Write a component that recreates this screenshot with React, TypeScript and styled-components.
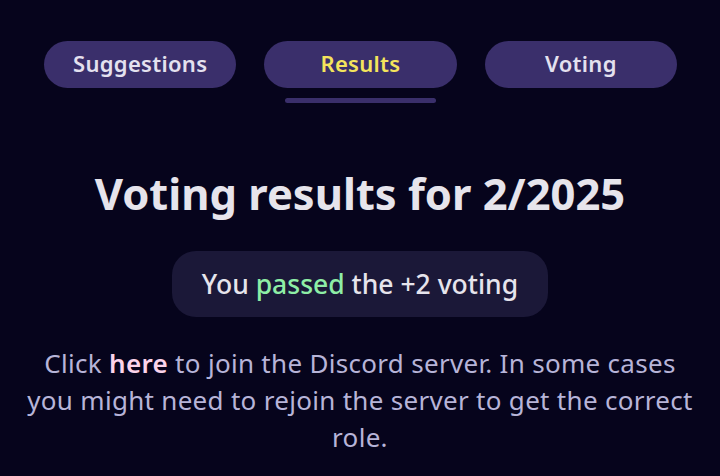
import * as React from "react";
import styled, { createGlobalStyle } from "styled-components";

const GlobalStyle = createGlobalStyle`
  html, body {
    margin: 0;
    padding: 0;
    background: #06041c;
  }
  body {
    font-family: "Noto Sans", "DejaVu Sans", sans-serif;
  }
`;

const Page = styled.div`
  width: 720px;
  height: 476px;
  overflow: hidden;
  background: #06041c;
  display: flex;
  flex-direction: column;
  align-items: center;
`;

const TabBar = styled.div`
  width: 100%;
  box-sizing: border-box;
  padding: 41px 43px 0 44px;
  display: grid;
  grid-template-columns: repeat(3, 1fr);
  column-gap: 28px;
`;

const TabCell = styled.div`
  display: flex;
  flex-direction: column;
  align-items: center;
`;

const Tab = styled.button<{ $active?: boolean }>`
  width: 100%;
  height: 47px;
  padding: 0 0 3px;
  border: none;
  border-radius: 24px;
  background: #3a2f6b;
  color: ${(p) => (p.$active ? "#f4e45c" : "#e4e1ef")};
  font-family: "Noto Sans", sans-serif;
  font-size: 22px;
  letter-spacing: 0.3px;
  font-weight: 600;
  cursor: pointer;
`;

const Underline = styled.div<{ $active?: boolean }>`
  width: 151px;
  height: 5px;
  margin-top: 10px;
  border-radius: 3px;
  background: ${(p) => (p.$active ? "#3a2f6b" : "transparent")};
`;

const Title = styled.h1`
  margin: 60px 0 0;
  font-size: 43.5px;
  font-weight: 700;
  color: #e6e4ec;
  line-height: 60px;
`;

const ResultPill = styled.div`
  margin-top: 28px;
  padding: 0 30px;
  height: 66px;
  border-radius: 24px;
  background: #1b1838;
  display: flex;
  align-items: center;
  font-size: 26.5px;
  font-weight: 500;
  color: #e6e4ec;
`;

const Passed = styled.span`
  color: #8eeea6;
`;

const Note = styled.p`
  margin: 28px 0 0;
  padding: 0 18px;
  text-align: center;
  font-size: 26px;
  letter-spacing: 0.3px;
  line-height: 37px;
  color: #b7b4d8;
`;

const Link = styled.a`
  color: #fbd3ea;
  font-weight: 600;
  text-decoration: none;
`;

const tabs = ["Suggestions", "Results", "Voting"];

export default function App() {
  const active = "Results";
  return (
    <Page>
      <GlobalStyle />
      <TabBar>
        {tabs.map((t) => (
          <TabCell key={t}>
            <Tab $active={t === active}>{t}</Tab>
            <Underline $active={t === active} />
          </TabCell>
        ))}
      </TabBar>
      <Title>Voting results for 2/2025</Title>
      <ResultPill>
        You&nbsp;<Passed>passed</Passed>&nbsp;the +2 voting
      </ResultPill>
      <Note>
        Click <Link href="#">here</Link> to join the Discord server. In some
        cases you might need to rejoin the server to get the correct role.
      </Note>
    </Page>
  );
}
